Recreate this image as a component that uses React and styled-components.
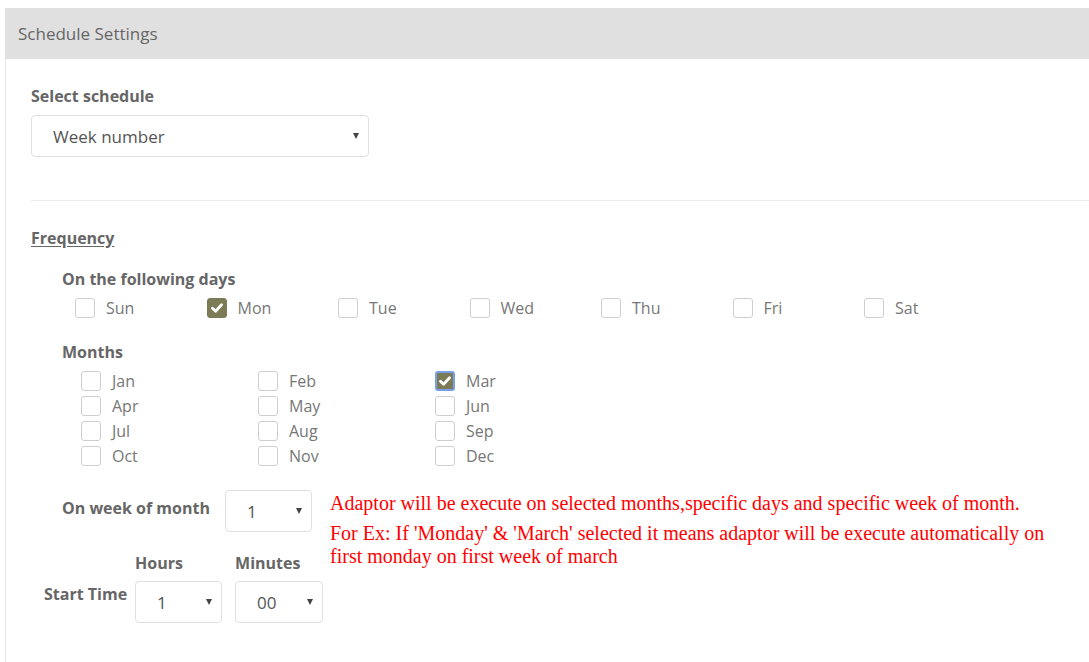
import React, { useState } from 'react'
import styled, { createGlobalStyle } from 'styled-components'

const GlobalStyle = createGlobalStyle`
  html, body {
    margin: 0;
    padding: 0;
    background: #fff;
    font-family: "Open Sans", "Noto Sans", sans-serif;
  }
`

const DAYS = ['Sun', 'Mon', 'Tue', 'Wed', 'Thu', 'Fri', 'Sat']
const MONTHS = ['Jan', 'Feb', 'Mar', 'Apr', 'May', 'Jun', 'Jul', 'Aug', 'Sep', 'Oct', 'Nov', 'Dec']

const CheckItem = ({ label, checked, focused, onToggle }) => (
    <CheckLabel onClick={onToggle}>
        <Box checked={checked} focused={focused}>
            {checked && (
                <svg width="12" height="10" viewBox="0 0 12 10">
                    <path d="M1.5 5.2 L4.6 8.2 L10.5 1.8" fill="none" stroke="#fff" strokeWidth="2.8" strokeLinecap="round" strokeLinejoin="round" />
                </svg>
            )}
        </Box>
        <CheckText>{label}</CheckText>
    </CheckLabel>
)

const Dropdown = ({ value, options, width, pad }) => (
    <SelectWrap width={width}>
        <Select defaultValue={value} pad={pad}>
            {options.map((o) => <option key={o}>{o}</option>)}
        </Select>
        <Caret />
    </SelectWrap>
)

const App = () => {
    const [days, setDays] = useState(['Mon'])
    const [months, setMonths] = useState(['Mar'])

    const toggle = (list, setList, v) => {
        setList(list.includes(v) ? list.filter((x) => x !== v) : [...list, v])
    }

    return (
        <Page>
            <GlobalStyle />
            <Panel>
                <Header>Schedule Settings</Header>
                <Body>
                    <FieldLabel>Select schedule</FieldLabel>
                    <Dropdown value="Week number" options={['Daily', 'Weekly', 'Monthly', 'Week number']} width={338} pad={21} />
                    <Divider />
                    <Frequency>Frequency</Frequency>
                    <Group>
                        <FieldLabel>On the following days</FieldLabel>
                        <DaysRow>
                            {DAYS.map((d) => (
                                <CheckItem key={d} label={d} checked={days.includes(d)} onToggle={() => toggle(days, setDays, d)} />
                            ))}
                        </DaysRow>
                        <MonthsLabel>Months</MonthsLabel>
                        <MonthsGrid>
                            {MONTHS.map((m) => (
                                <CheckItem key={m} label={m} checked={months.includes(m)} focused={m === 'Mar'} onToggle={() => toggle(months, setMonths, m)} />
                            ))}
                        </MonthsGrid>
                    </Group>
                    <BottomRow>
                        <FormCol>
                            <WeekRow>
                                <InlineLabel>On week of month</InlineLabel>
                                <Dropdown value="1" options={['1', '2', '3', '4', '5']} width={87} pad={21} />
                            </WeekRow>
                            <TimeRow>
                                <TimeLabel>Start Time</TimeLabel>
                                <TimeCol>
                                    <TimeHead>Hours</TimeHead>
                                    <Dropdown value="1" options={['1', '2', '3', '4', '5', '6', '7', '8', '9', '10', '11', '12']} width={87} pad={21} />
                                </TimeCol>
                                <TimeCol>
                                    <TimeHead>Minutes</TimeHead>
                                    <Dropdown value="00" options={['00', '15', '30', '45']} width={88} pad={21} />
                                </TimeCol>
                            </TimeRow>
                        </FormCol>
                        <Note>
                            <NoteLine>Adaptor will be execute on selected months,specific days and specific week of month.</NoteLine>
                            <NoteLine>For Ex: If 'Monday' &amp; 'March' selected it means adaptor will be execute automatically on first monday on first week of march</NoteLine>
                        </Note>
                    </BottomRow>
                </Body>
            </Panel>
        </Page>
    )
}

export default App

const Page = styled.div`
padding: 8px 0 0 5px;
height: 654px;
overflow: hidden;
`

const Panel = styled.div`
display: flex;
flex-direction: column;
height: 100%;
`

const Header = styled.div`
background-color: #e0e0e0;
height: 51px;
display: flex;
align-items: center;
padding-left: 13px;
font-size: 17px;
color: #666;
`

const Body = styled.div`
flex: 1;
border-left: 1px solid #e5e5e5;
padding: 26px 0 0 25px;
display: flex;
flex-direction: column;
align-items: flex-start;
`

const FieldLabel = styled.div`
font-size: 16px;
font-weight: 700;
color: #666;
line-height: 22px;
margin-bottom: 8px;
white-space: nowrap;
`

const SelectWrap = styled.div`
position: relative;
flex-shrink: 0;
width: ${({ width }) => width}px;
`

const Select = styled.select`
appearance: none;
width: 100%;
height: 42px;
border: 1px solid #e0e0e0;
border-radius: 4px;
background: #fff;
padding: 0 0 0 ${({ pad }) => pad}px;
font-family: "Open Sans", "Noto Sans", sans-serif;
font-size: 17px;
color: #555;
outline: none;
`

const Caret = styled.span`
position: absolute;
right: 10px;
top: 18px;
width: 0;
height: 0;
border-left: 3.5px solid transparent;
border-right: 3.5px solid transparent;
border-top: 6px solid #444;
pointer-events: none;
`

const Divider = styled.div`
align-self: stretch;
height: 1px;
background: #ebebeb;
margin-top: 43px;
`

const Frequency = styled.div`
margin-top: 26px;
font-size: 16px;
font-weight: 700;
color: #666;
line-height: 22px;
text-decoration: underline;
text-underline-offset: 2px;
`

const Group = styled.div`
padding-left: 31px;
margin-top: 19px;
display: flex;
flex-direction: column;
`

const DaysRow = styled.div`
display: grid;
grid-template-columns: repeat(7, 131.5px);
padding-left: 13px;
margin-top: 0;
`

const MonthsLabel = styled(FieldLabel)`
margin-top: 23px;
margin-bottom: 8px;
`

const MonthsGrid = styled.div`
display: grid;
grid-template-columns: repeat(3, 177px);
row-gap: 5px;
padding-left: 19px;
`

const CheckLabel = styled.label`
display: flex;
align-items: center;
gap: 11px;
cursor: pointer;
`

const Box = styled.span`
box-sizing: border-box;
width: 20px;
height: 20px;
border-radius: 3px;
border: ${({ checked, focused }) => focused ? '2px solid #77a0e6' : checked ? '1px solid #7b7b55' : '1px solid #cfcfcf'};
background: ${({ checked }) => checked ? '#7b7b55' : '#fff'};
display: flex;
align-items: center;
justify-content: center;
`

const CheckText = styled.span`
font-size: 16px;
color: #777;
line-height: 20px;
`

const BottomRow = styled.div`
display: flex;
align-items: flex-start;
margin-top: 24px;
`

const FormCol = styled.div`
display: flex;
flex-direction: column;
width: 299px;
flex-shrink: 0;
`

const WeekRow = styled.div`
display: flex;
align-items: flex-start;
padding-left: 31px;
`

const InlineLabel = styled.div`
font-size: 16px;
font-weight: 700;
color: #666;
line-height: 22px;
margin-top: 7px;
margin-right: 15px;
white-space: nowrap;
`

const TimeRow = styled.div`
display: flex;
align-items: flex-start;
margin-top: 20px;
padding-left: 13px;
`

const TimeLabel = styled.div`
font-size: 16px;
font-weight: 700;
color: #666;
line-height: 22px;
margin-top: 31px;
margin-right: 8px;
white-space: nowrap;
flex-shrink: 0;
`

const TimeCol = styled.div`
display: flex;
flex-direction: column;
margin-right: 13px;
flex-shrink: 0;
&:last-child {
    margin-right: 0;
}
`

const TimeHead = styled(FieldLabel)`
margin-bottom: 7px;
`

const Note = styled.div`
font-family: "Liberation Serif", "Times New Roman", serif;
font-size: 20px;
line-height: 23px;
color: #ff0000;
max-width: 730px;
`

const NoteLine = styled.p`
margin: 0;
&:first-child {
    margin: 2px 0 7px 0;
}
`
